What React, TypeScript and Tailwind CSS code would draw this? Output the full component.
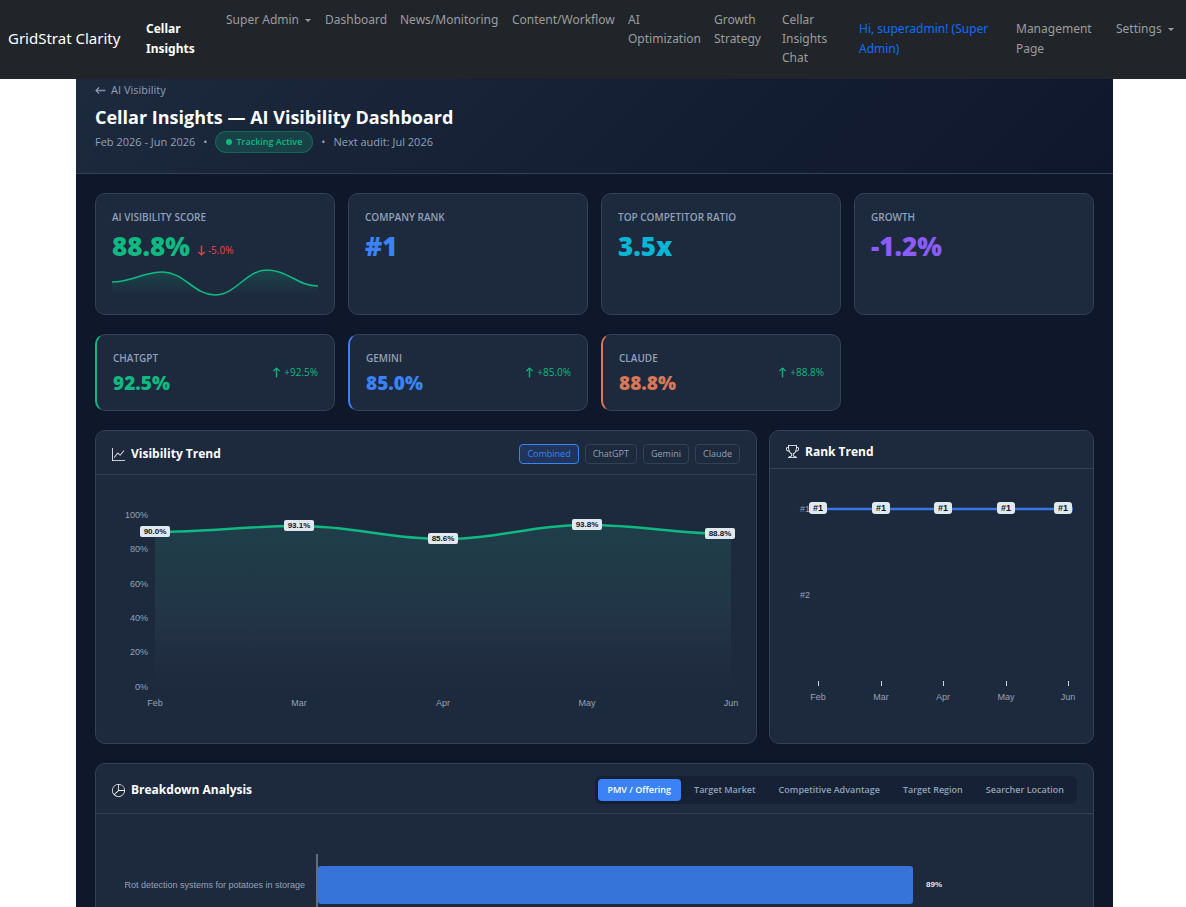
import React, { useState } from 'react';
import { BsArrowDown, BsArrowLeft, BsArrowUp, BsGraphUp, BsPieChart, BsTrophy } from 'react-icons/bs';

const NAV_LINKS = [
  { label: 'Super Admin', width: 'w-[99px]', caret: true },
  { label: 'Dashboard', width: 'w-[75px]' },
  { label: 'News/Monitoring', width: 'w-[112px]' },
  { label: 'Content/Workflow', width: 'w-[116px]' },
  { label: 'AI Optimization', width: 'w-[86px]' },
  { label: 'Growth Strategy', width: 'w-[68px]' },
  { label: 'Cellar Insights Chat', width: 'w-[64px]' },
];

const STATS = [
  { label: 'AI Visibility Score', value: '88.8%', color: 'text-[#10b981]', change: '-5.0%' },
  { label: 'Company Rank', value: '#1', color: 'text-[#3b82f6]' },
  { label: 'Top Competitor Ratio', value: '3.5x', color: 'text-[#06b6d4]' },
  { label: 'Growth', value: '-1.2%', color: 'text-[#8b5cf6]' },
];

const PLATFORMS = [
  { label: 'ChatGPT', value: '92.5%', color: 'text-[#10b981]', border: 'border-l-[#10b981]' },
  { label: 'Gemini', value: '85.0%', color: 'text-[#3b82f6]', border: 'border-l-[#3b82f6]' },
  { label: 'Claude', value: '88.8%', color: 'text-[#d97757]', border: 'border-l-[#d97757]' },
];

const FILTERS = ['Combined', 'ChatGPT', 'Gemini', 'Claude'];
const TABS = ['PMV / Offering', 'Target Market', 'Competitive Advantage', 'Target Region', 'Searcher Location'];

const TREND = [
  { month: 'Feb', x: 59, y: 57, value: '90.0%' },
  { month: 'Mar', x: 203, y: 51, value: '93.1%' },
  { month: 'Apr', x: 347, y: 64, value: '85.6%' },
  { month: 'May', x: 491, y: 50, value: '93.8%' },
  { month: 'Jun', x: 635, y: 59, value: '88.8%' },
];

const RANKS = [
  { month: 'Feb', x: 48 },
  { month: 'Mar', x: 111 },
  { month: 'Apr', x: 173 },
  { month: 'May', x: 236 },
  { month: 'Jun', x: 298 },
];

const CARD = 'rounded-[10px] border border-slate-700 bg-slate-800';

const smoothPath = (points: { x: number; y: number }[]) =>
  points
    .map((p, i) => {
      if (i === 0) return `M${p.x} ${p.y}`;
      const prev = points[i - 1];
      const dx = (p.x - prev.x) * 0.4;
      return `C${prev.x + dx} ${prev.y} ${p.x - dx} ${p.y} ${p.x} ${p.y}`;
    })
    .join(' ');

const Caret: React.FC = () => (
  <span className="ml-[6px] inline-block border-x-[3px] border-t-[3px] border-x-transparent border-t-current align-middle" />
);

const Navbar: React.FC = () => (
  <nav className="flex items-center bg-[#212529] pt-[10px] pb-3 pl-2 font-['Noto_Sans',sans-serif] text-xs leading-[19px] text-[#9b9d9e]">
    <a href="#" className="w-[138px] shrink-0 text-[15px] text-white">GridStrat Clarity</a>
    <a href="#" className="w-20 shrink-0 pr-5 font-bold leading-5 text-white">Cellar Insights</a>
    <ul className="flex shrink-0 self-start">
      {NAV_LINKS.map((item) => (
        <li key={item.label} className={`${item.width} shrink-0 pr-3`}>
          <a href="#" className={item.caret ? 'whitespace-nowrap' : ''}>
            {item.label}
            {item.caret && <Caret />}
          </a>
        </li>
      ))}
    </ul>
    <div className="ml-auto flex shrink-0 items-center leading-5">
      <a href="#" className="w-[157px] pr-5 text-[#0d6efd]">Hi, superadmin! (Super Admin)</a>
      <a href="#" className="w-[100px] pr-5">Management Page</a>
      <a href="#" className="w-[70px] self-start whitespace-nowrap">
        Settings
        <Caret />
      </a>
    </div>
  </nav>
);

const Sparkline: React.FC = () => {
  const line = smoothPath([
    { x: 0, y: 18 },
    { x: 51, y: 8 },
    { x: 103, y: 31 },
    { x: 155, y: 6 },
    { x: 206, y: 22 },
  ]);
  return (
    <svg viewBox="0 0 206 32" className="mt-px w-full" aria-hidden="true">
      <defs>
        <linearGradient id="spark" x1="0" y1="0" x2="0" y2="1">
          <stop offset="0" stopColor="#10b981" stopOpacity="0.2" />
          <stop offset="1" stopColor="#10b981" stopOpacity="0" />
        </linearGradient>
      </defs>
      <path d={`${line} V32 H0Z`} fill="url(#spark)" />
      <path d={line} fill="none" stroke="#10b981" strokeWidth="1.6" />
    </svg>
  );
};

const TrendChart: React.FC = () => {
  const line = smoothPath(TREND);
  return (
    <svg viewBox="0 0 660 268" className="w-full font-['Liberation_Sans',sans-serif] text-[9px]">
      <defs>
        <linearGradient id="trend" x1="0" y1="0" x2="0" y2="1">
          <stop offset="0" stopColor="#26a17f" stopOpacity="0.18" />
          <stop offset="0.5" stopColor="#3a7a78" stopOpacity="0.16" />
          <stop offset="1" stopColor="#64748b" stopOpacity="0" />
        </linearGradient>
      </defs>
      <g fill="#94a3b8" textAnchor="end">
        {[100, 80, 60, 40, 20, 0].map((tick, i) => (
          <text key={tick} x="52" y={Math.round(43 + i * 34.3)}>{tick}%</text>
        ))}
      </g>
      <path d={`${line} V211 H59Z`} fill="url(#trend)" />
      <path d={line} fill="none" stroke="#10b981" strokeWidth="2.4" />
      {TREND.map((p, i) => {
        const x = i === TREND.length - 1 ? p.x - 11 : p.x;
        return (
          <g key={p.month} textAnchor="middle">
            <text x={p.x} y="231" fill="#94a3b8">{p.month}</text>
            <rect x={x - 15} y={p.y - 6} width="30" height="11" rx="2" fill="#e2e8f0" />
            <text x={x} y={p.y + 2} fill="#0f172a" fontWeight="bold" className="text-[8px]">{p.value}</text>
          </g>
        );
      })}
    </svg>
  );
};

const RankChart: React.FC = () => (
  <svg viewBox="0 0 323 274" className="w-full font-['Liberation_Sans',sans-serif] text-[9px]">
    <g fill="#94a3b8">
      <text x="30" y="43">#1</text>
      <text x="30" y="129">#2</text>
    </g>
    <path d="M48 40H302" stroke="#3b82f6" strokeOpacity="0.9" strokeWidth="2.4" />
    <circle cx="299" cy="40" r="4" fill="#3b82f6" />
    {RANKS.map((p, i) => {
      const x = i === RANKS.length - 1 ? p.x - 5 : p.x;
      return (
        <g key={p.month} textAnchor="middle">
          <path d={`M${p.x + 0.5} 212V217`} stroke="#cbd5e1" />
          <text x={p.x} y="231" fill="#94a3b8">{p.month}</text>
          <rect x={x - 9} y="33" width="18" height="12" rx="3" fill="#e2e8f0" />
          <text x={x} y="42" fill="#0f172a" fontWeight="bold">#1</text>
        </g>
      );
    })}
  </svg>
);

const BreakdownChart: React.FC = () => (
  <svg viewBox="0 0 997 140" className="w-full font-['Liberation_Sans',sans-serif] text-[9px]">
    <text x="209" y="74" textAnchor="end" fill="#94a3b8">Rot detection systems for potatoes in storage</text>
    <rect x="222" y="52" width="595" height="38" rx="3" fill="#3674d9" />
    <path d="M221 40V140" stroke="#78869a" strokeWidth="1.5" />
    <text x="830" y="73" fill="#e2e8f0" fontWeight="bold" className="text-[8px]">89%</text>
  </svg>
);

const App: React.FC = () => {
  const [filter, setFilter] = useState('Combined');
  const [tab, setTab] = useState('PMV / Offering');

  return (
    <div className="h-screen overflow-hidden bg-white font-['Open_Sans','Noto_Sans',sans-serif]">
      <Navbar />
      <div className="pr-[73px] pl-[76px]">
        <div className="bg-slate-900">
          <header className="border-b border-slate-700 bg-linear-135 from-slate-800 to-slate-900 px-[19px] pt-[2px] pb-5 text-[11px] text-slate-400">
            <a href="#" className="flex items-center gap-[5px] leading-[18px]">
              <BsArrowLeft size={11} strokeWidth={1} />
              AI Visibility
            </a>
            <h1 className="mt-1 text-lg leading-[28px] font-bold text-white">Cellar Insights — AI Visibility Dashboard</h1>
            <div className="flex items-center gap-2">
              <span>Feb 2026 - Jun 2026</span>
              <span>•</span>
              <span className="flex items-center gap-1 rounded-full border border-[#10b981]/30 bg-[#10b981]/20 px-[10px] text-[9px] leading-5 font-semibold text-[#10b981]">
                <span className="size-[6px] rounded-full bg-[#10b981]" />
                Tracking Active
              </span>
              <span>•</span>
              <span>Next audit: Jul 2026</span>
            </div>
          </header>

          <main className="flex flex-col gap-[19px] p-[19px]">
            <section className="grid grid-cols-4 gap-[13px]">
              {STATS.map((stat) => (
                <div key={stat.label} className={`${CARD} min-h-[122px] px-4 py-[15px]`}>
                  <h2 className="text-[10px] leading-4 font-semibold text-slate-400 uppercase">{stat.label}</h2>
                  <div className="mt-1 flex items-baseline gap-[6px]">
                    <span className={`text-[26px] leading-[34px] font-extrabold ${stat.color}`}>{stat.value}</span>
                    {stat.change && (
                      <span className="flex items-center gap-px text-[10px] font-medium text-[#ef4444]">
                        <BsArrowDown size={11} strokeWidth={1} />
                        {stat.change}
                      </span>
                    )}
                  </div>
                  {stat.change && <Sparkline />}
                </div>
              ))}
            </section>

            <section className="grid grid-cols-4 gap-[13px]">
              {PLATFORMS.map((item) => (
                <div key={item.label} className={`${CARD} flex items-center justify-between border-l-2 px-4 py-[15px] ${item.border}`}>
                  <div>
                    <h2 className="text-[10px] leading-4 font-semibold text-slate-400 uppercase">{item.label}</h2>
                    <div className={`mt-[5px] text-[19px] leading-6 font-extrabold ${item.color}`}>{item.value}</div>
                  </div>
                  <span className="flex items-center gap-[2px] text-[10px] font-medium text-[#10b981]">
                    <BsArrowUp size={11} strokeWidth={1} />+{item.value}
                  </span>
                </div>
              ))}
            </section>

            <section className="grid grid-cols-[662fr_325fr] gap-3">
              <div className={CARD}>
                <div className="flex items-center justify-between border-b border-slate-700 px-4 pt-[13px] pb-[10px]">
                  <h2 className="flex items-center gap-[6px] text-xs font-bold text-white">
                    <BsGraphUp size={13} />
                    Visibility Trend
                  </h2>
                  <div className="flex gap-[6px]">
                    {FILTERS.map((name) => (
                      <button
                        key={name}
                        onClick={() => setFilter(name)}
                        className={`rounded border px-[7px] text-[9px] leading-[18px] font-medium ${filter === name ? 'border-[#3b82f6] bg-[#3b82f6]/15 text-[#3b82f6]' : 'border-slate-700 text-slate-400'
                          }`}
                      >
                        {name}
                      </button>
                    ))}
                  </div>
                </div>
                <TrendChart />
              </div>
              <div className={CARD}>
                <div className="border-b border-slate-700 px-4 pt-3 pb-2">
                  <h2 className="flex items-center gap-[6px] text-xs leading-[17px] font-bold text-white">
                    <BsTrophy size={13} />
                    Rank Trend
                  </h2>
                </div>
                <RankChart />
              </div>
            </section>

            <section className={CARD}>
              <div className="flex items-center justify-between border-b border-slate-700 px-4 pt-3 pb-[9px]">
                <h2 className="flex items-center gap-[6px] text-xs font-bold text-white">
                  <BsPieChart size={13} />
                  Breakdown Analysis
                </h2>
                <div className="flex gap-[3px] rounded-md bg-slate-900/40 p-[3px]">
                  {TABS.map((name) => (
                    <button
                      key={name}
                      onClick={() => setTab(name)}
                      className={`rounded px-[10px] text-[9px] leading-[22px] font-semibold ${tab === name ? 'bg-[#3b82f6] text-white shadow' : 'text-slate-400'
                        }`}
                    >
                      {name}
                    </button>
                  ))}
                </div>
              </div>
              <BreakdownChart />
            </section>
          </main>
        </div>
      </div>
    </div>
  );
};

export default App;
